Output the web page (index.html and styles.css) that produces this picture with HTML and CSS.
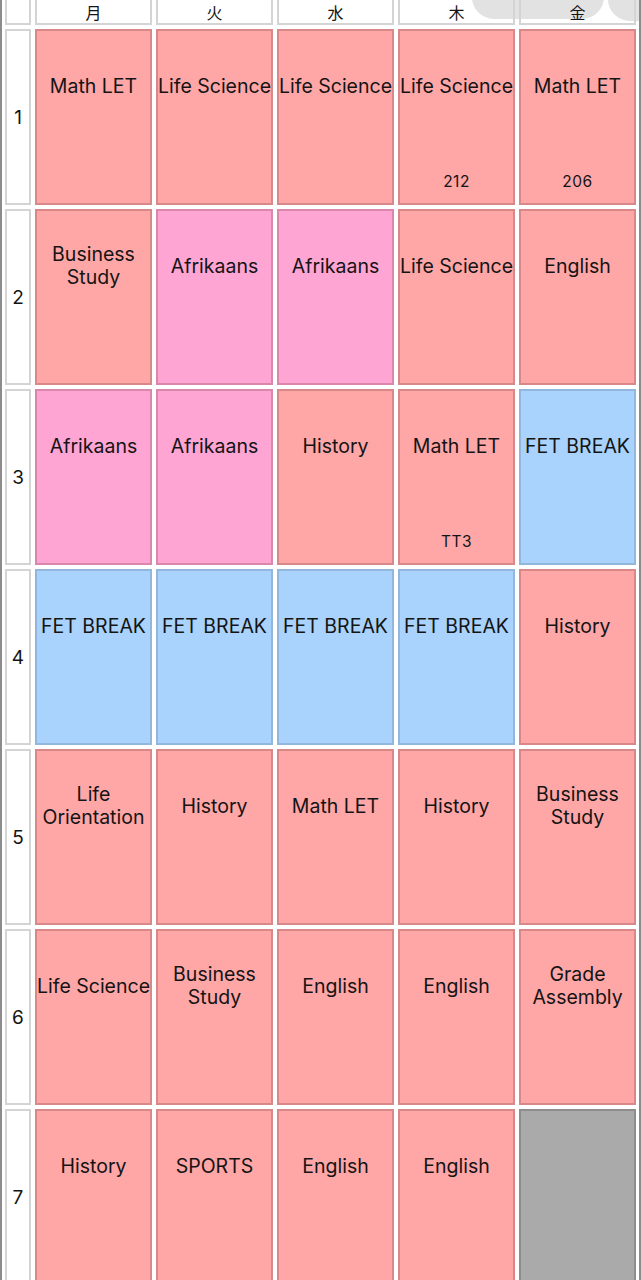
FILE: index.html
```html
<!DOCTYPE html>
<html lang="ja">
<head>
<meta charset="utf-8">
<title>Timetable</title>
<link rel="stylesheet" href="styles.css">
</head>
<body>
<div class="frame">
  <div class="blob blob-a"></div>
  <div class="blob blob-b"></div>
  <div class="grid">
    <div class="hd"></div>
    <div class="hd">月</div>
    <div class="hd">火</div>
    <div class="hd">水</div>
    <div class="hd">木</div>
    <div class="hd">金</div>

    <div class="num">1</div>
    <div class="cell red"><div class="title">Math LET</div></div>
    <div class="cell red"><div class="title">Life Science</div></div>
    <div class="cell red"><div class="title">Life Science</div></div>
    <div class="cell red"><div class="title">Life Science</div><div class="room">212</div></div>
    <div class="cell red"><div class="title">Math LET</div><div class="room">206</div></div>

    <div class="num">2</div>
    <div class="cell red"><div class="title">Business<br>Study</div></div>
    <div class="cell pink"><div class="title">Afrikaans</div></div>
    <div class="cell pink"><div class="title">Afrikaans</div></div>
    <div class="cell red"><div class="title">Life Science</div></div>
    <div class="cell red"><div class="title">English</div></div>

    <div class="num">3</div>
    <div class="cell pink"><div class="title">Afrikaans</div></div>
    <div class="cell pink"><div class="title">Afrikaans</div></div>
    <div class="cell red"><div class="title">History</div></div>
    <div class="cell red"><div class="title">Math LET</div><div class="room">TT3</div></div>
    <div class="cell blue"><div class="title">FET BREAK</div></div>

    <div class="num">4</div>
    <div class="cell blue"><div class="title">FET BREAK</div></div>
    <div class="cell blue"><div class="title">FET BREAK</div></div>
    <div class="cell blue"><div class="title">FET BREAK</div></div>
    <div class="cell blue"><div class="title">FET BREAK</div></div>
    <div class="cell red"><div class="title">History</div></div>

    <div class="num">5</div>
    <div class="cell red"><div class="title">Life<br>Orientation</div></div>
    <div class="cell red"><div class="title">History</div></div>
    <div class="cell red"><div class="title">Math LET</div></div>
    <div class="cell red"><div class="title">History</div></div>
    <div class="cell red"><div class="title">Business<br>Study</div></div>

    <div class="num">6</div>
    <div class="cell red"><div class="title">Life Science</div></div>
    <div class="cell red"><div class="title">Business<br>Study</div></div>
    <div class="cell red"><div class="title">English</div></div>
    <div class="cell red"><div class="title">English</div></div>
    <div class="cell red"><div class="title">Grade<br>Assembly</div></div>

    <div class="num">7</div>
    <div class="cell red"><div class="title">History</div></div>
    <div class="cell red"><div class="title">SPORTS</div></div>
    <div class="cell red"><div class="title">English</div></div>
    <div class="cell red"><div class="title">English</div></div>
    <div class="cell gray"></div>
  </div>
</div>
</body>
</html>
```

FILE: styles.css
```css
html, body {
  margin: 0;
  padding: 0;
  background: #ffffff;
}

.frame {
  position: relative;
  width: 641px;
  height: 1280px;
  box-sizing: border-box;
  border-left: 2px solid #8c8c8c;
  border-right: 2px solid #8c8c8c;
  overflow: hidden;
  background: #fff;
  font-family: Inter, "Noto Sans", "Noto Sans CJK JP", sans-serif;
  color: #141414;
}

.grid {
  position: relative;
  z-index: 1;
  display: grid;
  grid-template-columns: 26px repeat(5, 117px);
  grid-template-rows: 25px repeat(7, 176px);
  gap: 4px;
  padding-left: 3px;
}

.hd {
  box-sizing: border-box;
  border: 2px solid #d4d4d4;
  border-top: none;
  background: transparent;
  display: flex;
  align-items: center;
  justify-content: center;
  font-family: "Noto Sans CJK JP", sans-serif;
  font-size: 16px;
  line-height: 21px;
  padding-top: 1px;
}

.num {
  box-sizing: border-box;
  border: 2px solid #d4d4d4;
  background: #fff;
  display: flex;
  align-items: center;
  justify-content: center;
  font-size: 19px;
}

.cell {
  box-sizing: border-box;
  border: 2px solid rgba(120, 60, 70, 0.28);
  display: flex;
  flex-direction: column;
  align-items: center;
  text-align: center;
  overflow: hidden;
}

.red { background: #ffa6a6; }
.pink { background: #ffa5d3; }
.blue { background: #a9d2fc; border-color: #92b6dc; }
.gray { background: #aaaaaa; border-color: #8d8d8d; }

.title {
  height: 110px;
  display: flex;
  align-items: center;
  justify-content: center;
  font-size: 19.5px;
  line-height: 23px;
  white-space: nowrap;
}

.room {
  margin-top: auto;
  padding-bottom: 12px;
  font-size: 15.5px;
  line-height: 18px;
  letter-spacing: 0.5px;
}

.blob {
  position: absolute;
  z-index: 0;
  background: #e2e2e2;
}

.blob-a {
  left: 470px;
  top: -40px;
  width: 132px;
  height: 59px;
  border-radius: 22px;
}

.blob-b {
  left: 606px;
  top: -40px;
  width: 60px;
  height: 61px;
  border-radius: 22px;
}
```
